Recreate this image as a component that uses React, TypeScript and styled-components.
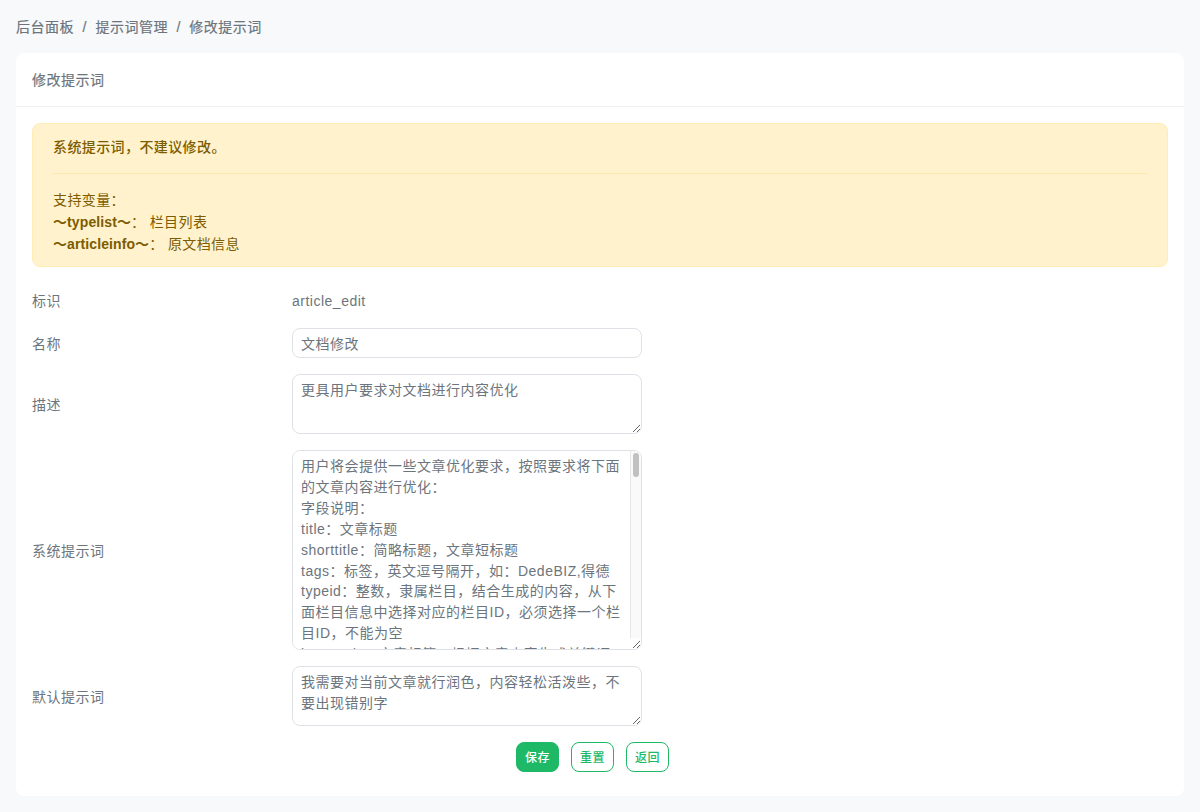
import React from "react";
import styled, { createGlobalStyle } from "styled-components";

const Global = createGlobalStyle`
  html, body { margin: 0; padding: 0; background: #f8f9fb; }
  body {
    font-family: "Liberation Sans", "Noto Sans CJK SC", sans-serif;
    font-size: 14px;
    line-height: 21px;
    letter-spacing: 0.5px;
    color: #6c757d;
  }
`;

const Page = styled.div`
  display: flex;
  flex-direction: column;
  height: 812px;
  box-sizing: border-box;
  padding: 16px;
`;

const Breadcrumb = styled.nav`
  display: flex;
  box-sizing: border-box;
  height: 21px;
  padding-top: 1px;
  margin-bottom: 16px;
  -webkit-text-stroke: 0.2px #6c757d;
`;

const Separator = styled.span`
  padding: 0 8.5px;
`;

const Card = styled.section`
  background: #fff;
  border-radius: 8px;
  height: 743px;
`;

const CardHeader = styled.header`
  height: 54px;
  box-sizing: border-box;
  padding: 17px 16px 0;
  border-bottom: 1px solid #eff0f3;
  -webkit-text-stroke: 0.2px #6c757d;
`;

const CardBody = styled.div`
  padding: 16px;
`;

const Alert = styled.div`
  box-sizing: border-box;
  height: 144px;
  padding: 13px 20px;
  margin-bottom: 22px;
  background: #fff2cc;
  border: 1px solid #ffecb5;
  border-radius: 8px;
  color: #7d5c00;
  letter-spacing: 0.4px;
`;

const AlertTitle = styled.div`
  font-weight: 500;
`;

const AlertRule = styled.hr`
  border: 0;
  border-top: 1px solid #fbe8ae;
  margin: 15px 0;
`;

const AlertLine = styled.div`
  line-height: 22px;
`;

const Var = styled.b`
  font-weight: 700;
  letter-spacing: 0.1px;
`;

const Row = styled.div`
  display: grid;
  grid-template-columns: 260px 350px;
  align-items: center;
  margin-bottom: 16px;
`;

const Label = styled.label`
  padding-top: 2px;
`;

const Value = styled.div`
  padding-top: 2px;
`;

const TextInput = styled.input`
  display: block;
  box-sizing: border-box;
  width: 350px;
  height: 30px;
  padding: 0 8px;
  border: 1px solid #dee2e6;
  border-radius: 8px;
  background: #fff;
  font: inherit;
  letter-spacing: inherit;
  color: #6c757d;
  outline: none;
`;

const TextArea = styled.textarea<{ $h: number; $scroll?: boolean }>`
  display: block;
  box-sizing: border-box;
  width: 350px;
  height: ${(p) => p.$h}px;
  padding: 5px ${(p) => (p.$scroll ? 19 : 8)}px 5px 8px;
  border: 1px solid #dee2e6;
  border-radius: 8px;
  background: #fff;
  font: inherit;
  line-height: 20.9px;
  letter-spacing: inherit;
  color: #6c757d;
  outline: none;
  resize: vertical;
`;

const ScrollHost = styled.div`
  position: relative;
  width: 350px;
`;

const ScrollTrack = styled.div`
  position: absolute;
  top: 1px;
  right: 1px;
  bottom: 12px;
  width: 11px;
  box-sizing: border-box;
  background: #fafafa;
  border-left: 1px solid #e8e8e8;
  border-top-right-radius: 7px;
  pointer-events: none;
`;

const ScrollThumb = styled.div`
  position: absolute;
  top: 2px;
  left: 2px;
  width: 6px;
  height: 24px;
  border-radius: 3px;
  background: #c1c1c1;
`;

const Actions = styled.div`
  display: flex;
  justify-content: center;
  gap: 12px;
  padding-right: 15px;
`;

const Button = styled.button<{ $solid?: boolean }>`
  box-sizing: border-box;
  width: 43px;
  height: 30px;
  padding: 2px 0 0;
  border: 1px solid #1eb967;
  border-radius: 8px;
  background: ${(p) => (p.$solid ? "#1eb967" : "#fff")};
  color: ${(p) => (p.$solid ? "#fff" : "#1eb967")};
  font-family: inherit;
  font-size: 12px;
  font-weight: 500;
  letter-spacing: 0.5px;
  line-height: 18px;
`;

const SYSTEM_PROMPT = `用户将会提供一些文章优化要求，按照要求将下面的文章内容进行优化：
字段说明：
title：文章标题
shorttitle：简略标题，文章短标题
tags：标签，英文逗号隔开，如：DedeBIZ,得德
typeid：整数，隶属栏目，结合生成的内容，从下面栏目信息中选择对应的栏目ID，必须选择一个栏目ID，不能为空
keywords：文章标签，根据文章内容生成关键词
description：文章摘要，根据文章内容生成简短的摘要
请以JSON格式返回优化后的结果`;

export default function App() {
  return (
    <Page>
      <Global />
      <Breadcrumb>
        <span>后台面板</span>
        <Separator>/</Separator>
        <span>提示词管理</span>
        <Separator>/</Separator>
        <span>修改提示词</span>
      </Breadcrumb>
      <Card>
        <CardHeader>修改提示词</CardHeader>
        <CardBody>
          <Alert>
            <AlertTitle>系统提示词，不建议修改。</AlertTitle>
            <AlertRule />
            <AlertLine>支持变量：</AlertLine>
            <AlertLine><Var>～typelist～</Var>： 栏目列表</AlertLine>
            <AlertLine><Var>～articleinfo～</Var>： 原文档信息</AlertLine>
          </Alert>
          <Row>
            <Label>标识</Label>
            <Value>article_edit</Value>
          </Row>
          <Row>
            <Label>名称</Label>
            <TextInput defaultValue="文档修改" />
          </Row>
          <Row>
            <Label>描述</Label>
            <TextArea $h={60} defaultValue="更具用户要求对文档进行内容优化" />
          </Row>
          <Row>
            <Label>系统提示词</Label>
            <ScrollHost>
              <TextArea $h={200} $scroll defaultValue={SYSTEM_PROMPT} />
              <ScrollTrack>
                <ScrollThumb />
              </ScrollTrack>
            </ScrollHost>
          </Row>
          <Row>
            <Label>默认提示词</Label>
            <TextArea $h={60} defaultValue="我需要对当前文章就行润色，内容轻松活泼些，不要出现错别字" />
          </Row>
          <Actions>
            <Button $solid>保存</Button>
            <Button>重置</Button>
            <Button>返回</Button>
          </Actions>
        </CardBody>
      </Card>
    </Page>
  );
}
